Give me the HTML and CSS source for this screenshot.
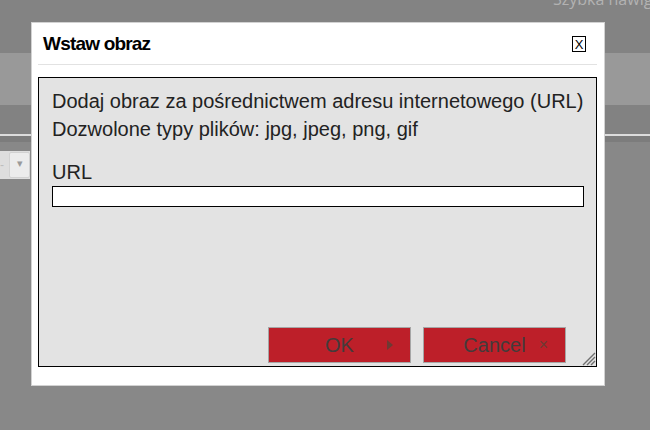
FILE: index.html
```html
<!DOCTYPE html>
<html lang="pl">
<head>
    <meta charset="UTF-8">
    <title>Wstaw obraz</title>
    <link rel="stylesheet" href="styles.css">
</head>
<body>
    <div class="page">
        <div class="topbar"><span class="quicknav">Szybka nawigacja</span></div>
        <div class="navbar"></div>
        <div class="subbar"></div>
        <div class="toolbar">
            <div class="tool-left">
                <span class="tool-mark">-</span>
                <span class="tool-drop">&#9662;</span>
            </div>
        </div>
    </div>

    <div class="dialog">
        <div class="dlg-head">
            <span class="dlg-title">Wstaw obraz</span>
            <span class="dlg-close">X</span>
        </div>
        <div class="dlg-body">
            <p class="dlg-text">Dodaj obraz za pośrednictwem adresu internetowego (URL)</p>
            <p class="dlg-text">Dozwolone typy plików: jpg, jpeg, png, gif</p>
            <label class="dlg-label" for="url">URL</label>
            <input class="dlg-input" type="text" id="url">
            <div class="dlg-buttons">
                <button class="dlg-btn" type="button">
                    <span class="btn-text">OK</span>
                    <span class="btn-icon btn-arrow"></span>
                </button>
                <button class="dlg-btn" type="button">
                    <span class="btn-text">Cancel</span>
                    <span class="btn-icon btn-x">&#215;</span>
                </button>
            </div>
            <svg class="dlg-grip" width="15" height="15" viewBox="0 0 15 15">
                <path d="M14 2 L2 14 M14 6 L6 14 M14 10 L10 14" stroke="#6f6f6f" stroke-width="1.4" fill="none"/>
            </svg>
        </div>
    </div>
</body>
</html>
```

FILE: styles.css
```css
body {
    margin: 0;
    padding: 0;
    background: #888888;
    font-family: 'Liberation Sans', Arial, sans-serif;
    overflow: hidden;
    height: 430px;
}
.page {
    display: flex;
    flex-direction: column;
}
.topbar {
    height: 53px;
    background: #838383;
    overflow: hidden;
}
.quicknav {
    display: block;
    margin: -12px 0 0 553px;
    white-space: nowrap;
    font-family: 'Open Sans', sans-serif;
    font-size: 16px;
    line-height: 22px;
    color: #b2b2b2;
}
.navbar {
    height: 52px;
    background: #999999;
}
.subbar {
    height: 29px;
    background: #828282;
    border-bottom: 2px solid #dcdcdc;
}
.toolbar {
    border-top: 6px solid #7c7c7c;
    padding-top: 9px;
}
.tool-left {
    width: 30px;
    height: 28px;
    background: #dedede;
    display: flex;
    align-items: center;
    gap: 3px;
}
.tool-mark {
    font-size: 12px;
    color: #bdbdbd;
    width: 6px;
}
.tool-drop {
    width: 19px;
    height: 24px;
    background: #ececec;
    border: 1px solid #d2d2d2;
    border-radius: 2px;
    font-size: 11px;
    line-height: 20px;
    text-align: center;
    color: #9a9a9a;
}
.dialog {
    position: absolute;
    top: 22px;
    left: 31px;
    width: 574px;
    height: 364px;
    box-sizing: border-box;
    background: #fff;
    border: 1px solid #d2d2d2;
    padding: 0 7px 18px 6px;
    display: flex;
    flex-direction: column;
}
.dlg-head {
    height: 41px;
    border-bottom: 1px solid #e2e2e2;
    display: flex;
    align-items: center;
    justify-content: space-between;
    padding: 0 11px 0 5px;
}
.dlg-title {
    font-size: 19px;
    line-height: 22px;
    font-weight: 700;
    letter-spacing: -0.8px;
    color: #000;
}
.dlg-close {
    width: 12px;
    height: 14px;
    border: 1px solid #000;
    font-size: 13px;
    line-height: 15px;
    text-align: center;
    color: #000;
}
.dlg-body {
    position: relative;
    margin-top: 12px;
    flex: 1;
    border: 1px solid #000;
    background: #e3e3e3;
    padding: 9px 12px 3px 13px;
    display: flex;
    flex-direction: column;
    color: #222;
}
.dlg-text {
    margin: 0;
    font-size: 20px;
    line-height: 28px;
}
.dlg-label {
    margin-top: 15px;
    font-size: 20px;
    line-height: 28px;
}
.dlg-input {
    margin: 0;
    height: 21px;
    box-sizing: border-box;
    border: 1px solid #000;
    background: #fff;
    padding: 0 4px;
}
.dlg-buttons {
    margin-top: auto;
    display: flex;
    justify-content: flex-end;
    gap: 12px;
    padding-right: 18px;
}
.dlg-btn {
    width: 143px;
    height: 36px;
    margin: 0;
    border: 1px solid #a6a6a6;
    background: #bd1f29;
    color: #433b3b;
    font-family: 'Liberation Sans', Arial, sans-serif;
    font-size: 20px;
    display: grid;
    grid-template-columns: 1fr auto 1fr;
    align-items: center;
    padding: 0 17px 0 0;
}
.btn-text {
    grid-column: 2;
    padding-left: 17px;
}
.btn-icon {
    grid-column: 3;
    justify-self: end;
}
.btn-arrow {
    width: 0;
    height: 0;
    border-top: 5px solid transparent;
    border-bottom: 5px solid transparent;
    border-left: 6px solid #6e3a33;
}
.btn-x {
    font-size: 16px;
    line-height: 16px;
    color: #6e3a33;
}
.dlg-grip {
    position: absolute;
    right: 0;
    bottom: 0;
}
```
